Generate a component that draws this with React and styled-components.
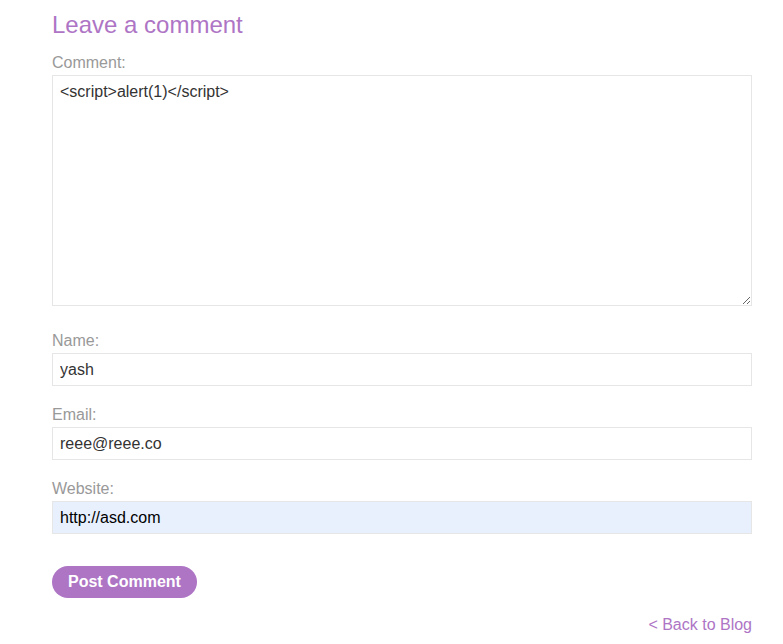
import styled, { createGlobalStyle } from "styled-components";

const GlobalStyle = createGlobalStyle`
  body {
    margin: 0;
    background: #fff;
    font-family: "Liberation Sans", Arial, sans-serif;
  }
`;

const Page = styled.div`
  padding: 11px 0 0 52px;
  width: 700px;
`;

const Heading = styled.h1`
  margin: 0 0 15px;
  font-size: 24px;
  line-height: 28px;
  font-weight: normal;
  color: #ae75c5;
`;

const Form = styled.form`
  display: flex;
  flex-direction: column;
`;

const Label = styled.label`
  display: block;
  font-size: 16px;
  line-height: 18px;
  color: #999;
  margin-bottom: 3px;
`;

const Field = styled.div`
  display: flex;
  flex-direction: column;
  margin-bottom: ${(p) => p.after || 20}px;
`;

const TextArea = styled.textarea`
  box-sizing: border-box;
  width: 700px;
  height: 231px;
  margin: 0;
  padding: 7px 7px;
  border: 1px solid #e6e6e6;
  font-family: "Liberation Sans", Arial, sans-serif;
  font-size: 16px;
  line-height: 18px;
  color: #333;
  outline: none;
`;

const Input = styled.input`
  box-sizing: border-box;
  width: 700px;
  height: 33px;
  margin: 0;
  padding: 0 7px;
  border: 1px solid #e6e6e6;
  background: ${(p) => (p.filled ? "#e8f0fe" : "#fff")};
  font-family: "Liberation Sans", Arial, sans-serif;
  font-size: 16px;
  color: ${(p) => (p.filled ? "#000" : "#333")};
  outline: none;
`;

const Button = styled.button`
  align-self: flex-start;
  height: 32px;
  padding: 0 16px;
  border: none;
  border-radius: 16px;
  background: #ae75c5;
  color: #fff;
  font-family: "Liberation Sans", Arial, sans-serif;
  font-size: 16px;
  font-weight: bold;
  cursor: pointer;
`;

const BackRow = styled.div`
  display: flex;
  justify-content: flex-end;
  margin-top: 18px;
`;

const BackLink = styled.a`
  font-size: 16px;
  line-height: 18px;
  color: #ae75c5;
  text-decoration: none;
  cursor: pointer;
`;

const App = () => {
  return (
    <Page>
      <GlobalStyle />
      <Heading>Leave a comment</Heading>
      <Form onSubmit={(e) => e.preventDefault()}>
        <Field after={26}>
          <Label>Comment:</Label>
          <TextArea defaultValue="<script>alert(1)</script>" />
        </Field>
        <Field>
          <Label>Name:</Label>
          <Input defaultValue="yash" />
        </Field>
        <Field>
          <Label>Email:</Label>
          <Input defaultValue="reee@reee.co" />
        </Field>
        <Field after={32}>
          <Label>Website:</Label>
          <Input filled defaultValue="http://asd.com" />
        </Field>
        <Button type="submit">Post Comment</Button>
      </Form>
      <BackRow>
        <BackLink>&lt; Back to Blog</BackLink>
      </BackRow>
    </Page>
  );
};

export default App;
